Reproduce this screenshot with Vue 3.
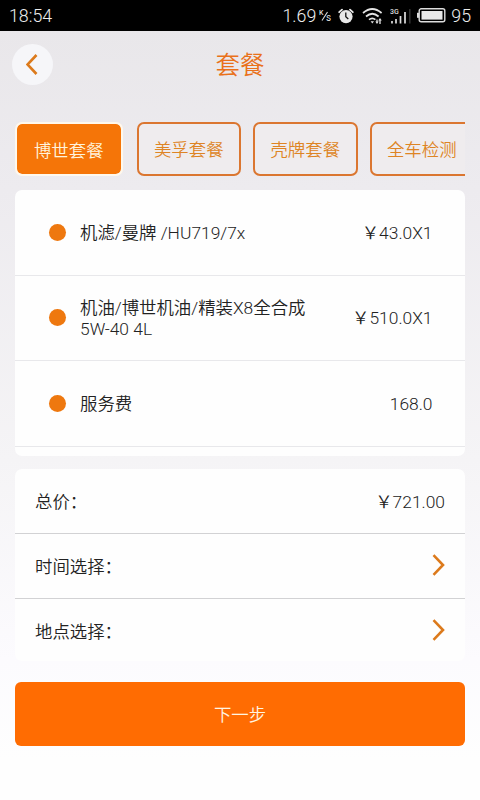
<script setup>
const tabs = ['博世套餐', '美孚套餐', '壳牌套餐', '全车检测']
const items = [
  { name: '机滤/曼牌 /HU719/7x', price: '￥43.0X1' },
  { name: '机油/博世机油/精装X8全合成 5W-40 4L', price: '￥510.0X1' },
  { name: '服务费', price: '168.0' },
]
</script>

<template>
  <div class="screen">
    <div class="status">
      <span class="time">18:54</span>
      <span class="speed">1.69</span>
      <svg class="unit" width="13" height="14" viewBox="0 0 13 14">
        <text x="0" y="6" font-size="7" font-weight="500">K</text>
        <path d="M3 11.500L8.500 3" stroke="#ddd" stroke-width="1.100" />
        <text x="7" y="12" font-size="10" font-weight="400">s</text>
      </svg>
      <svg class="alarm" width="16" height="16" viewBox="0 0 16 16">
        <circle cx="8" cy="8.600" r="6.600" fill="#e8e8e8" />
        <path d="M1.200 4.200L4 1.600M14.800 4.200L12 1.600" stroke="#e8e8e8" stroke-width="1.800" stroke-linecap="round" />
        <path d="M7.800 4.600V8.800L10.300 11" fill="none" stroke="#111" stroke-width="1.300" />
      </svg>
      <svg class="wifi" width="21" height="18" viewBox="0 0 21 18">
        <g fill="none" stroke="#e4e4e4" stroke-width="1.700">
          <path d="M1 6Q10.300 -2 19.600 6" />
          <path d="M4 9.500Q10.300 4 16.600 9.500" />
          <path d="M7 12.700Q10.300 10 13.400 12.700" />
        </g>
        <path d="M8.600 14.300H12L10.300 16.400Z" fill="#e4e4e4" />
        <path d="M15 12.500V15M18 13V17" stroke="#e4e4e4" stroke-width="1.300" />
        <path d="M13.300 14.500H16.700L15 17ZM16.200 13.500H19.800L18 11Z" fill="#e4e4e4" />
      </svg>
      <svg class="signal" width="22" height="18" viewBox="0 0 22 18">
        <text x="0" y="6.500" font-size="7" font-weight="500">3G</text>
        <path d="M2 14V16.500M6 12V16.500M10.500 9V16.500M15 5V16.500" stroke="#ddd" stroke-width="1.700" />
        <path d="M19.800 2V16.500" stroke="#333" stroke-width="1.500" />
      </svg>
      <svg class="battery" width="29" height="15" viewBox="0 0 29 15">
        <rect x="2.200" y="0.800" width="25.600" height="13" rx="2" fill="none" stroke="#ddd" stroke-width="1.400" />
        <rect x="4.500" y="3" width="21" height="8.600" fill="#e8e8e8" />
        <rect x="0" y="4.800" width="2" height="5" fill="#ddd" />
      </svg>
      <span class="level">95</span>
    </div>

    <header class="header">
      <button class="back">
        <svg width="12" height="21" viewBox="0 0 12 21"><path d="M10.500 1L1.500 10.500L10.500 20" /></svg>
      </button>
      <h1>套餐</h1>
    </header>

    <nav class="tabs">
      <button v-for="(tab, i) in tabs" :key="tab" class="tab" :class="{ active: i === 0 }">{{ tab }}</button>
    </nav>

    <section class="card items">
      <div v-for="item in items" :key="item.name" class="item">
        <i class="dot"></i>
        <span class="name">{{ item.name }}</span>
        <span class="price">{{ item.price }}</span>
      </div>
    </section>

    <section class="card summary">
      <div class="line"><span>总价：</span><span>￥721.00</span></div>
      <div v-for="label in ['时间选择：', '地点选择：']" :key="label" class="line">
        <span>{{ label }}</span>
        <svg class="chevron" width="13" height="22" viewBox="0 0 13 22"><path d="M1.500 1.200L11 11L1.500 20.800" /></svg>
      </div>
    </section>

    <button class="next">下一步</button>
  </div>
</template>

<style>
body {
  margin: 0;
}
</style>

<style scoped>
.screen {
  width: 480px;
  height: 800px;
  overflow: hidden;
  box-sizing: border-box;
  background: linear-gradient(#e9e7ea 30px, #edebef 190px, #f5f4f6 460px, #fcfbfe 660px, #fefefe 760px);
  font-family: Roboto, "Noto Sans CJK SC", sans-serif;
  font-size: 17.400px;
  font-weight: 350;
  color: #222;
}
button {
  font: inherit;
  padding: 0;
  border: 0;
}
.status {
  display: flex;
  align-items: center;
  height: 31px;
  padding: 0 9px;
  box-sizing: border-box;
  background: #000;
  color: #eee;
  font-size: 17.800px;
}
.status text {
  fill: #ddd;
}
.time {
  flex: 1;
}
.unit {
  margin-left: 3px;
}
.alarm {
  margin-left: 6px;
}
.wifi {
  margin-left: 8px;
}
.signal {
  margin-left: 7px;
}
.battery {
  margin-left: 5px;
}
.level {
  margin-left: 5px;
}
.header {
  display: grid;
  grid-template-columns: 41px 1fr 41px;
  align-items: center;
  height: 67px;
  padding: 0 12px;
}
.back {
  display: flex;
  align-items: center;
  justify-content: center;
  width: 41px;
  height: 41px;
  padding-right: 2px;
  border-radius: 50%;
  background: #f6f6f9;
}
.back path,
.chevron path {
  fill: none;
  stroke: #dc7a1c;
  stroke-width: 2.600;
}
.chevron {
  padding-bottom: 1px;
}
h1 {
  margin: 0;
  padding-top: 2px;
  text-align: center;
  font-size: 24.500px;
  line-height: 36px;
  font-weight: 350;
  color: #e9711a;
}
.tabs {
  display: flex;
  gap: 12px;
  margin: 24px 15px 0;
  height: 54px;
  overflow: hidden;
}
.tab {
  flex: none;
  width: 104.500px;
  height: 54px;
  box-sizing: border-box;
  padding-bottom: 2px;
  border: 2.500px solid #db7630;
  border-radius: 7px;
  background: #efecee;
  color: #de8424;
}
.tab.active {
  width: 107.500px;
  margin-right: 2px;
  padding-bottom: 0;
  border: 2px solid #fff8ec;
  background: #f57508 padding-box;
  color: #fff3dc;
}
.card {
  margin: 0 15px;
  border-radius: 7px;
  background: #fefefe;
  overflow: hidden;
}
.items {
  margin-top: 14px;
  height: 266px;
}
.item {
  display: flex;
  align-items: center;
  height: 85.600px;
  box-sizing: border-box;
  border-bottom: 1px solid #e8e8eb;
  padding: 0 32.500px 0 34px;
}
.dot {
  flex: none;
  width: 17px;
  height: 17px;
  border-radius: 50%;
  background: #ee780f;
}
.name,
.price {
  padding-top: 2px;
  line-height: 21px;
}
.name {
  width: 240px;
  margin-left: 14px;
}
.price {
  margin-left: auto;
}
.summary {
  margin-top: 13px;
  height: 192px;
}
.line {
  display: flex;
  align-items: center;
  justify-content: space-between;
  height: 65px;
  box-sizing: border-box;
  padding: 0 20px 1px;
  border-bottom: 1.500px solid #d2d2d4;
}
.line span {
  padding-bottom: 1px;
}
.line:last-child {
  border: 0;
  padding-bottom: 2px;
}
.next {
  display: block;
  width: 450px;
  height: 64px;
  margin: 21.400px 15px 0;
  padding-bottom: 1px;
  border-radius: 6px;
  background: #ff6c02;
  color: #fff5e2;
}
</style>
